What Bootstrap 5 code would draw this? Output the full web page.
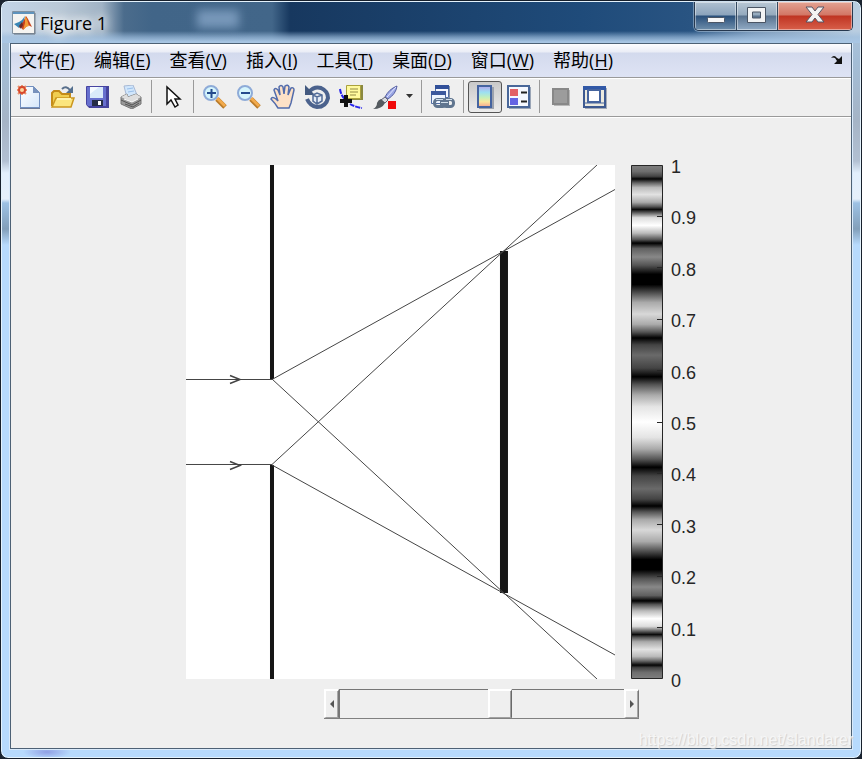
<!DOCTYPE html>
<html lang="zh-CN">
<head>
<meta charset="utf-8">
<meta name="viewport" content="width=device-width, initial-scale=1">
<title>Figure 1</title>
<link rel="stylesheet" href="https://cdn.jsdelivr.net/npm/bootstrap@5.3.0/dist/css/bootstrap.min.css">
<style>
body { background: #1b2430; font-family: "Open Sans", "Noto Sans CJK SC", sans-serif; color: #000; }
.window-frame {
  min-height: 100vh; padding: 0 9px 9px; border: 1px solid #17202c; border-radius: 8px;
  box-shadow: inset 0 0 0 1px #e4f2fc;
  background:
    radial-gradient(ellipse 24px 7px at 46px calc(100% - 6px), #8f9fe4, transparent) no-repeat,
    linear-gradient(#b3c9df 0, #a3bdd6 60px, #a5b4c6 120px, #b2c0d2 160px, #e2effc 172px, #e6f0fb 198px, #9dc1e4 202px, #829fba 228px, #b7dafd 244px);
}
.title-bar {
  height: 41px; margin: 1px -8px 0; padding-left: 10px; border-radius: 6px 6px 0 0;
  background:
    linear-gradient(transparent 29px, #9dbdddaa 35px, #a8c6e4 40px),
    linear-gradient(90deg, #c3d5e8 0, #b9c8d6 60px, #a0b3c5 100px, #4b6c8c 122px, #416588 150px, #426689 270px, #17385f 288px, #1f4b7a 580px, #295482 690px, #7897b8 750px, #b9cde0 852px);
}
.title-blur { left: 195px; top: 8px; width: 42px; height: 18px; background: #7898ba; filter: blur(5px); }
.title-text { font-size: 18px; line-height: 24px; text-shadow: 0 0 8px #fff, 0 0 12px #fff, 0 0 14px #fff; }
.caption-group { height: 29px; margin-right: 7px; border: 1px solid #26384f; border-top: 0; border-radius: 0 0 5px 5px; overflow: hidden; box-shadow: 0 0 0 1px #b9cde080; }
.caption-btn { width: 42px; border: 0; border-right: 1px solid #33485f; padding: 0; box-shadow: inset 0 0 0 1px #ffffff70; background: linear-gradient(#b0c1d1 0, #8ba3bb 13px, #294f7a 14px, #6f8fac 28px); }
.caption-btn svg { margin-bottom: 4px; }
.caption-btn.cap-max { width: 41px; background: linear-gradient(#b9c8d5 0, #94a9bd 13px, #59728e 14px, #91abc5 28px); }
.caption-btn.cap-close { width: 74px; border-right: 0; background: linear-gradient(#e3a393 0, #d27665 13px, #bf3422 14px, #d8604a 28px); }
.client-area { border: 1px solid #4d6175; background: #efefef; box-shadow: 0 0 0 1px #d9eafb; }
.menu-strip { height: 34px; gap: 19px; padding: 0 8px 2px; border-bottom: 1px solid #9a9a9a; background: linear-gradient(#fdfdff 0, #eaedf6 8px, #d3daed 9px, #dee3f4 33px); }
.menu-strip a { font-size: 18px; line-height: 24px; color: #000; text-decoration: none; white-space: nowrap; }
.menu-strip u { text-underline-offset: 2px; text-decoration-thickness: 1px; }
.tool-strip { height: 39px; padding: 0 0 2px 1px; border-top: 1px solid #fff; border-bottom: 1px solid #9a9a9a; }
.tool-btn { width: 34px; height: 32px; padding: 0; border: 0; background: none; display: flex; align-items: center; justify-content: center; }
.tool-btn.is-on { border: 1px solid #555; border-radius: 3px; background: linear-gradient(#c9c9c9, #ececec); }
.tool-btn.drop-btn { width: 16px; }
.tool-sep { width: 1px; height: 33px; margin: 0 4px 0 3px; background: #9a9a9a; }
.figure-area { padding: 47px 0 24px; border-top: 1px solid #fff; }
.figure-box { width: 530px; padding-left: 20px; }
.scale-labels { margin: -10px 0 -14px 8px; font: 18px/24px "Liberation Sans", sans-serif; color: #262626; }
.scroll-row { width: 315px; height: 30px; margin: 10px 0 0 138px; border-bottom: 1px solid #808080; }
.scroll-btn { width: 15px; padding: 0; border: solid; border-width: 2px 1px 1px 2px; border-color: #fff #777 #a0a0a0 #fff; background: #efefef; box-shadow: inset -1px 0 #a8a8a8; }
.scroll-range { -webkit-appearance: none; appearance: none; min-width: 0; height: 29px; margin: 0; background: #efefef; border-top: 1px solid #777; border-left: 1px solid #777; }
.scroll-range::-webkit-slider-thumb { -webkit-appearance: none; width: 24px; height: 29px; margin-top: -1px; border: solid; border-width: 2px 1px 1px 2px; border-color: #fff #696969 #a0a0a0 #fff; background: #efefef; box-shadow: inset -1px 0 #a0a0a0; }
.page-credit { right: 8px; bottom: 6px; font: 16px/24px "Liberation Sans", sans-serif; color: #f6f6f6; text-shadow: 1px 1px 1px #cfcfcf; }
</style>
<script src="https://cdn.jsdelivr.net/npm/bootstrap@5.3.0/dist/js/bootstrap.bundle.min.js"></script>
</head>
<body>
<div class="window-frame d-flex flex-column position-relative">
  <header class="title-bar d-flex position-relative">
    <span class="title-blur position-absolute"></span>
    <div class="d-flex align-items-center flex-grow-1 gap-1">
      <svg width="24" height="24" viewBox="0 0 24 24" aria-hidden="true">
        <path d="M.5.5h22v22H.5z" fill="#f5f4f1" stroke="#8191a0"/><path d="M1 1h21v2H1z" fill="#5e93bd"/><path d="M23 2v21H2" fill="none" stroke="#6b7580"/>
        <path d="M2 13l5-2 3-2 3-4-2 8-4 4z" fill="#3a86b5"/><path d="M7 17l4-6 3-6 2 3 4 8-4-2-5 5-2-3z" fill="#c9411b"/><path d="M13 5l2 3 2 7-3 1-3 3 2-7z" fill="#f19a37"/><path d="M7 15l3-4 1 3-2 4z" fill="#6b2a28"/>
      </svg>
      <span class="title-text">Figure 1</span>
    </div>
    <div class="caption-group d-flex">
      <button class="caption-btn" type="button" aria-label="最小化"><svg width="20" height="20" viewBox="0 0 20 20"><rect x="1.500" y="12.500" width="17" height="5" rx="1" fill="#f7f7f7" stroke="#4a5564"/></svg></button>
      <button class="caption-btn cap-max" type="button" aria-label="最大化"><svg width="20" height="20" viewBox="0 0 20 20"><path d="M.5 2.500h18v15H.5zM5.500 7v6h8V7z" fill="#f2f3f4" stroke="#4a5564" fill-rule="evenodd"/></svg></button>
      <button class="caption-btn cap-close" type="button" aria-label="关闭"><svg width="20" height="20" viewBox="0 0 20 20"><path d="M1 2h6l3 4 3-4h6l-6 7.500 6 7.500h-6l-3-4-3 4H1l6-7.500z" fill="#f4f3f3" stroke="#565564"/></svg></button>
    </div>
  </header>

  <div class="client-area d-flex flex-column flex-grow-1">
    <nav class="menu-strip d-flex align-items-center" aria-label="菜单">
      <a href="#">文件(<u>F</u>)</a><a href="#">编辑(<u>E</u>)</a><a href="#">查看(<u>V</u>)</a><a href="#">插入(<u>I</u>)</a><a href="#">工具(<u>T</u>)</a><a href="#">桌面(<u>D</u>)</a><a href="#">窗口(<u>W</u>)</a><a href="#">帮助(<u>H</u>)</a>
      <svg class="ms-auto" width="12" height="9" viewBox="0 0 12 9" aria-hidden="true"><path d="M0 3q3-4 6 0l2 1 3-3v8H3l3-3-2-3q-2-1-4 0z" fill="#111"/></svg>
    </nav>

    <div class="tool-strip d-flex align-items-center" role="toolbar" aria-label="工具栏">
      <button class="tool-btn" type="button" aria-label="新建"><svg width="24" height="24" viewBox="0 0 24 24"><defs><linearGradient id="paper" x2="1" y2="1"><stop stop-color="#fff"/><stop offset="1" stop-color="#d5e6fa"/></linearGradient></defs><path d="M3 2h14l6 6v16H3z" fill="#6d7994"/><path d="M3.500 1.500h13l6 6v15h-19z" fill="url(#paper)" stroke="#718fc0"/><path d="M16 1v7h7z" fill="#7892bd"/><path d="M5 0v10M0 5h10M1 1l8 8M9 1L1 9" stroke="#e9936e" stroke-width="2"/><circle cx="5" cy="5" r="3" fill="#fbd7a0" stroke="#d8492d" stroke-width="2"/></svg></button>
      <button class="tool-btn" type="button" aria-label="打开"><svg width="24" height="24" viewBox="0 0 24 24"><path d="M1 21V8l2-2h5l3 3h8v4" fill="#f0ce50" stroke="#c48b19" stroke-width="2"/><path d="M1 22l4-9h18l-3 9z" fill="#fbe57d" stroke="#cb961e" stroke-width="1.500"/><path d="M6 14h14" stroke="#fff3ad" stroke-width="2"/><path d="M11 4q4-4 8 1" fill="none" stroke="#596f8c" stroke-width="2"/><path d="M22 1v7h-7z" fill="#55708f"/></svg></button>
      <button class="tool-btn" type="button" aria-label="保存"><svg width="24" height="24" viewBox="0 0 24 24"><path d="M2 1h22v22H4l-2-3z" fill="#45449b"/><path d="M1.500 1.500h20v20H3l-1.500-2z" fill="#6770ce" stroke="#4744a1"/><path d="M5 2h13v11H5z" fill="#f5faff"/><path d="M5 9l9-7h4v11H5z" fill="#d9eafa"/><path d="M7 15h11v6H7z" fill="#262d45"/><path d="M13 16h3v4h-3z" fill="#fff"/></svg></button>
      <button class="tool-btn" type="button" aria-label="打印"><svg width="24" height="24" viewBox="0 0 24 24"><path d="M5 1l9-1 4 10-10 3z" fill="#d0e6fc" stroke="#a8b9d4"/><path d="M8 4l6-1M9 7l6-1" stroke="#9abfe9"/><path d="M2 12l6-3 1 3 8-3 5 3v7l-9 5-11-5z" fill="#999" stroke="#777"/><path d="M2 12l6-3 1 3 8-3 5 3-9 5z" fill="#dedede"/><path d="M2 15l11 5 9-5M6 19l8 3 6-4" fill="none" stroke="#555"/><path d="M5 14l8 3 6-3" fill="none" stroke="#fff"/></svg></button>
      <span class="tool-sep"></span>
      <button class="tool-btn" type="button" aria-label="选择"><svg width="20" height="26" viewBox="0 0 20 26"><path d="M4 3v17l4-4 4 7 3-2-3-6h5z" fill="#fff" stroke="#111" stroke-width="1.500"/></svg></button>
      <span class="tool-sep"></span>
      <button class="tool-btn" type="button" aria-label="放大"><svg width="24" height="24" viewBox="0 0 24 24"><path d="M14 14l8 8" stroke="#ba7b29" stroke-width="5"/><path d="M14 13l8 8" stroke="#f2aa4c" stroke-width="3"/><circle cx="8" cy="8" r="7" fill="#d5f5fc" stroke="#8eabd8" stroke-width="2"/><path d="M4 8h9M8.500 4v9" stroke="#244b8d" stroke-width="2"/></svg></button>
      <button class="tool-btn" type="button" aria-label="缩小"><svg width="24" height="24" viewBox="0 0 24 24"><path d="M14 14l8 8" stroke="#ba7b29" stroke-width="5"/><path d="M14 13l8 8" stroke="#f2aa4c" stroke-width="3"/><circle cx="8" cy="8" r="7" fill="#d5f5fc" stroke="#8eabd8" stroke-width="2"/><path d="M4 8h9" stroke="#244b8d" stroke-width="2"/></svg></button>
      <button class="tool-btn" type="button" aria-label="平移"><svg width="26" height="26" viewBox="0 0 26 26"><path d="M8 24q-3-5-7-9 1-3 5 0l2 2L4 6q1-3 4 0l2 5L9 3q2-3 4 0l1 7 1-8q3-2 4 1l-1 8 3-7q3-1 3 2l-3 13-2 5z" fill="#fde1c7" stroke="#526cac" stroke-width="1.500"/></svg></button>
      <button class="tool-btn" type="button" aria-label="三维旋转"><svg width="26" height="26" viewBox="0 0 26 26"><path d="M5 8q5-6 12-4 7 3 7 10-2 9-11 9-7-1-10-8" fill="none" stroke="#4b628d" stroke-width="4"/><path d="M1 1v10h10z" fill="#445a80"/><path d="M9 11l4-2 5 2v6l-5 3-4-3zM9 11l4 2 5-2M13 13v6" fill="#e6edf8" stroke="#536c98" stroke-width="1.500"/></svg></button>
      <button class="tool-btn" type="button" aria-label="数据游标"><svg width="26" height="26" viewBox="0 0 26 26"><path d="M10 1h15v15H10z" fill="#8b893f"/><path d="M8.500 1.500h14v13h-14z" fill="#fffa9d" stroke="#aaa13d"/><path d="M12 5h8M12 8h8M12 11h6" stroke="#928a44"/><path d="M2 5q1 7 5 10M12 20q5 3 12 4" fill="none" stroke="#2824ed" stroke-width="2" stroke-dasharray="5 1"/><path d="M8 11v12M2 17h12" stroke="#111" stroke-width="4"/></svg></button>
      <button class="tool-btn" type="button" aria-label="刷亮"><svg width="26" height="26" viewBox="0 0 26 26"><path d="M25 2q-8 3-12 11l3 2q8-5 9-13z" fill="#9aa7e5" stroke="#565fa2"/><path d="M24 3l-9 10" stroke="#e4e6ff"/><path d="M13 13l3 3-3 3-4-3z" fill="#d8dbe0" stroke="#667"/><path d="M9 15l4 4q-3 6-12 6 4-2 4-6 1-3 4-4z" fill="#555b60"/><path d="M16 17h8v8h-8z" fill="#f00a0a"/></svg></button>
      <button class="tool-btn drop-btn" type="button" aria-label="刷亮选项"><svg width="8" height="5" viewBox="0 0 8 5"><path d="M0 0h7L3.500 4z" fill="#333"/></svg></button>
      <span class="tool-sep"></span>
      <button class="tool-btn" type="button" aria-label="链接绘图"><svg width="24" height="24" viewBox="0 0 24 24"><path d="M4.500.5h13v12h-13z" fill="#f5f8ff" stroke="#516da3"/><path d="M4 0h14v4H4z" fill="#315099"/><path d="M18.500 1v13" stroke="#8794a8"/><path d="M.5 6.500h14v12H.5z" fill="#eef5ff" stroke="#516da3"/><path d="M0 6h15v4H0z" fill="#3c599d"/><rect x="3.500" y="14.500" width="11" height="7" rx="3" fill="none" stroke="#60758f" stroke-width="3"/><rect x="12.500" y="14.500" width="10" height="7" rx="3" fill="none" stroke="#60758f" stroke-width="3"/><path d="M9 18h9" stroke="#60758f" stroke-width="4"/><path d="M5 14.500h7M15 14.500h6M10 17.500h7" stroke="#d2dfeb"/></svg></button>
      <span class="tool-sep"></span>
      <button class="tool-btn is-on" type="button" aria-pressed="true" aria-label="插入颜色栏"><svg width="18" height="24" viewBox="0 0 18 24"><defs><linearGradient id="hues" x2="0" y2="1"><stop stop-color="#b4a5ed"/><stop offset=".3" stop-color="#9ce0f2"/><stop offset=".55" stop-color="#c4efba"/><stop offset=".75" stop-color="#fbe79b"/><stop offset="1" stop-color="#f5a38e"/></linearGradient></defs><path d="M3 2h15v22H3z" fill="#9ca2ad"/><path d="M2 1h13v21H2z" fill="url(#hues)" stroke="#4564a0" stroke-width="2"/></svg></button>
      <button class="tool-btn" type="button" aria-label="插入图例"><svg width="24" height="24" viewBox="0 0 24 24"><path d="M2 2h22v22H2z" fill="#9aa5b6"/><path d="M1 1h21v21H1z" fill="#f5f8ff" stroke="#496799" stroke-width="2"/><path d="M3 4h8v7H3z" fill="#e36066"/><path d="M3 13h8v7H3z" fill="#6463e3"/><path d="M14 7.500h6M14 16.500h6" stroke="#222" stroke-width="2"/></svg></button>
      <span class="tool-sep"></span>
      <button class="tool-btn" type="button" aria-label="隐藏绘图工具"><svg width="18" height="18" viewBox="0 0 18 18"><path d="M2 2h16v16H2z" fill="#b9b9b9"/><path d="M1 1h15v15H1z" fill="#9c9c9c" stroke="#888" stroke-width="2"/></svg></button>
      <button class="tool-btn" type="button" aria-label="显示绘图工具"><svg width="24" height="24" viewBox="0 0 24 24"><path d="M2 3h22v21H2z" fill="#a5abb6"/><path d="M1 2h21v20H1z" fill="#eceadf" stroke="#3d5990" stroke-width="2"/><path d="M0 1h23v4H0z" fill="#3158a6"/><path d="M5 5h12v12H5z" fill="#fff" stroke="#46649e" stroke-width="2"/><path d="M1 18h21" stroke="#46649e"/></svg></button>
    </div>

    <main class="figure-area flex-grow-1">
      <div class="figure-box mx-auto">
        <div class="d-flex">
          <svg width="429" height="514" viewBox="0 0 429 514" role="img" aria-label="双缝光路">
            <path d="M0 0h429v514H0z" fill="#fff"/>
            <path d="M84 0h4v214h-4zM84 300h4v214h-4zM314 86h8v342h-8z" fill="#161616"/>
            <g fill="none" stroke="#444" stroke-width="1"><path d="M0 214.500h86L429 24.500M86 214l325 300M0 299.500h86L411 0M86 300l343 190"/><path d="M44 210.500l10 4-10 4M44 296.500l10 4-10 4" stroke-width="1.500"/></g>
          </svg>
          <svg class="ms-3" width="32" height="514" viewBox="0 0 32 514" role="img" aria-label="光强色条">
            <defs><linearGradient id="fringes" gradientUnits="userSpaceOnUse" x1="0" y1="0" x2="0" y2="257" spreadMethod="reflect">
              <stop offset="0" stop-color="#808080"/><stop offset=".025" stop-color="#6e6e6e"/><stop offset=".044" stop-color="#444"/><stop offset=".054" stop-color="#050505"/><stop offset=".07" stop-color="#666"/><stop offset=".088" stop-color="#bbb"/><stop offset=".115" stop-color="#e2e2e2"/><stop offset=".145" stop-color="#aaa"/><stop offset=".162" stop-color="#555"/><stop offset=".173" stop-color="#0a0a0a"/><stop offset=".187" stop-color="#666"/><stop offset=".205" stop-color="#ddd"/><stop offset=".235" stop-color="#fff"/><stop offset=".265" stop-color="#bbb"/><stop offset=".29" stop-color="#555"/><stop offset=".304" stop-color="#000"/><stop offset=".325" stop-color="#606060"/><stop offset=".358" stop-color="#888"/><stop offset=".39" stop-color="#555"/><stop offset=".425" stop-color="#000"/><stop offset=".465" stop-color="#000"/><stop offset=".5" stop-color="#555"/><stop offset=".535" stop-color="#aaa"/><stop offset=".58" stop-color="#d8d8d8"/><stop offset=".62" stop-color="#aaa"/><stop offset=".65" stop-color="#555"/><stop offset=".673" stop-color="#000"/><stop offset=".7" stop-color="#444"/><stop offset=".74" stop-color="#6a6a6a"/><stop offset=".79" stop-color="#444"/><stop offset=".824" stop-color="#000"/><stop offset=".855" stop-color="#555"/><stop offset=".895" stop-color="#aaa"/><stop offset=".94" stop-color="#e4e4e4"/><stop offset="1" stop-color="#fff"/>
            </linearGradient></defs>
            <path d="M.5.5h31v513H.5z" fill="url(#fringes)" stroke="#262626"/>
            <path d="M26 51.500h5M26 102.500h5M26 154.500h5M26 205.500h5M26 257.500h5M26 308.500h5M26 359.500h5M26 411.500h5M26 462.500h5" stroke="#262626"/>
          </svg>
          <div class="scale-labels d-flex flex-column justify-content-between">
            <span>1</span><span>0.9</span><span>0.8</span><span>0.7</span><span>0.6</span><span>0.5</span><span>0.4</span><span>0.3</span><span>0.2</span><span>0.1</span><span>0</span>
          </div>
        </div>
        <div class="scroll-row d-flex">
          <button class="scroll-btn" type="button" aria-label="减小"><svg class="d-block mx-auto" width="5" height="8" viewBox="0 0 5 8"><path d="M4 0v8L0 4z" fill="#555"/></svg></button>
          <input class="scroll-range flex-grow-1" type="range" min="0" max="100" value="57" aria-label="位置">
          <button class="scroll-btn" type="button" aria-label="增大"><svg class="d-block mx-auto" width="5" height="8" viewBox="0 0 5 8"><path d="M0 0v8l4-4z" fill="#555"/></svg></button>
        </div>
      </div>
    </main>
  </div>
  <span class="page-credit position-absolute">https://blog.csdn.net/slandarer</span>
</div>
</body>
</html>
